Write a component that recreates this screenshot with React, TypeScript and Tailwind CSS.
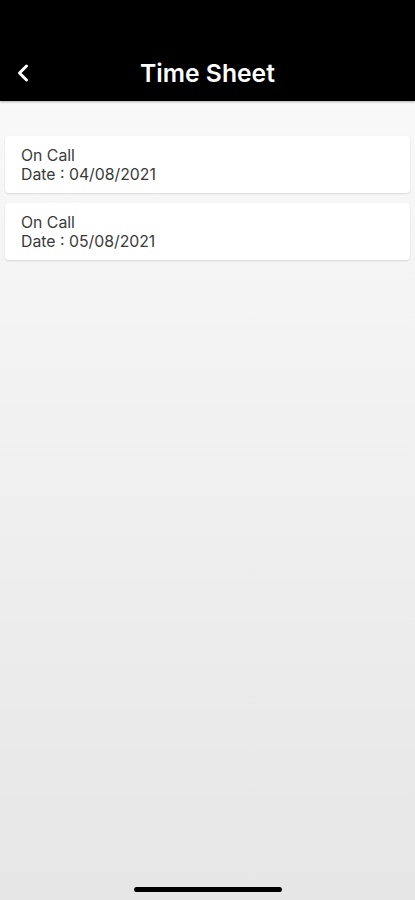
import { ChevronLeft } from 'lucide-react';

const entries = [
  { type: 'On Call', date: '04/08/2021' },
  { type: 'On Call', date: '05/08/2021' },
];

export default function App() {
  return (
    <div className="relative flex h-[900px] w-[415px] flex-col bg-gradient-to-b from-[#fbfbfb] to-[#e6e6e6] font-['Inter',sans-serif]">
      {/* Header */}
      <div className="relative flex h-[101px] shrink-0 items-end justify-center bg-black pb-[13px] shadow-[0_1px_2px_rgba(0,0,0,0.3)]">
        <button className="absolute bottom-[14px] left-[9px] text-white">
          <ChevronLeft size={28} strokeWidth={2.6} />
        </button>
        <h1 className="text-[24.7px] font-semibold leading-[30px] text-white">Time Sheet</h1>
      </div>

      {/* List */}
      <div className="flex flex-col gap-[10px] px-[5px] pt-[35px]">
        {entries.map((e, i) => (
          <div
            key={i}
            className="flex h-[57px] flex-col justify-center rounded-[4px] bg-white px-[16px] text-[15.8px] leading-[19px] text-[#3a3a3a] shadow-[0_1px_2px_rgba(0,0,0,0.12)]"
          >
            <span>{e.type}</span>
            <span>Date : {e.date}</span>
          </div>
        ))}
      </div>

      {/* Home indicator */}
      <div className="absolute bottom-[8px] left-[134px] h-[5px] w-[148px] rounded-full bg-black" />
    </div>
  );
}
